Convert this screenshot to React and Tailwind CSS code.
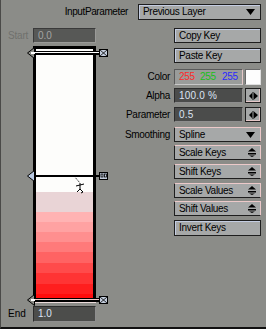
import React from "react";

const font = { fontFamily: '"Liberation Sans", Arial, sans-serif' };

// stripes of the gradient, top to bottom (height in px, colour)
const stripes = [
  [20, "bg-[#e9d4d6]"],
  [10, "bg-[#ffb3b3]"],
  [10, "bg-[#ffa2a2]"],
  [10, "bg-[#ff8f8f]"],
  [10, "bg-[#ff7a7a]"],
  [11, "bg-[#ff6363]"],
  [10, "bg-[#ff4b4b]"],
  [11, "bg-[#ff3434]"],
  [10, "bg-[#ff1e1e]"],
  [5, "bg-[#ff0c0c]"],
];

function Handle({ kind, className }) {
  const filled = kind === "mid";
  return (
    <svg
      className={"absolute left-[-10px] " + className}
      width="82"
      height="12"
      viewBox="0 0 82 12"
    >
      {filled ? (
        <rect x="8" y="5" width="66" height="2" fill="#000" />
      ) : (
        <>
          <rect x="5" y="4" width="69" height="4" fill="#000" />
          <rect
            x="4"
            y="5"
            width="69"
            height="1"
            fill={kind === "bottom" ? "#f4c8c8" : "#fff"}
          />
        </>
      )}
      <polygon
        points="1.5,6 8.5,0.5 8.5,11.5"
        fill={filled ? "#b9c9e2" : "#8c8d88"}
        stroke="#000"
        strokeWidth="1"
      />
      {!filled && <rect x="5" y="5" width="4" height="2" fill="#fff" />}
      <rect
        x="73.5"
        y="2.5"
        width="8"
        height="7"
        fill="#c3cddd"
        stroke="#000"
        strokeWidth="1"
      />
      {filled ? (
        <>
          <rect x="75" y="4" width="2" height="3" fill="none" stroke="#000" strokeWidth="0.8" />
          <rect x="78.5" y="4" width="2" height="3" fill="none" stroke="#000" strokeWidth="0.8" />
        </>
      ) : (
        <path d="M74 3 L81 9 M81 3 L74 9" stroke="#000" strokeWidth="0.8" />
      )}
    </svg>
  );
}

function Cursor() {
  return (
    <svg
      className="absolute left-[37px] top-[126px]"
      width="14"
      height="20"
      viewBox="0 0 14 20"
    >
      <path
        d="M1 1 L7 8"
        stroke="#000"
        strokeWidth="1"
        strokeDasharray="1.5 1.5"
        fill="none"
      />
      <path
        d="M7 8 L7 14 M3 11 L11 9 M7 14 L4 17 M7 14 L10 17 L8 18"
        stroke="#000"
        strokeWidth="1"
        fill="none"
      />
    </svg>
  );
}

function Button({ label, right, className = "" }) {
  return (
    <div
      className={
        "flex items-center justify-between h-[15px] w-[87px] bg-[#a6a8a8] border border-[#1e1e1e] shadow-[inset_1px_1px_0_#c4cde2] pl-[4px] pr-[4px] text-[10px] text-black leading-none " +
        className
      }
    >
      <span className="tracking-[-0.3px]">{label}</span>
      {right}
    </div>
  );
}

function DownArrow() {
  return (
    <svg width="9" height="6" viewBox="0 0 9 6">
      <polygon points="0,0 9,0 4.5,6" fill="#000" />
    </svg>
  );
}

function UpDown() {
  return (
    <svg width="8" height="9" viewBox="0 0 8 9">
      <polygon points="0,3.5 8,3.5 4,0" fill="#000" />
      <rect x="0" y="5" width="8" height="1.5" fill="#000" />
      <polygon points="1,7.5 7,7.5 4,9" fill="#000" />
    </svg>
  );
}

function Spin() {
  return (
    <div className="flex items-center justify-center h-[15px] w-[16px] bg-[#a6a8a8] border border-[#1e1e1e] shadow-[inset_-1px_-1px_0_#e6c8c8]">
      <svg width="9" height="8" viewBox="0 0 9 8">
        <polygon points="0,4 3,1 3,7" fill="#000" />
        <rect x="3.5" y="0" width="1" height="8" fill="#000" />
        <polygon points="5,0.5 9,4 5,7.5" fill="#000" />
      </svg>
    </div>
  );
}

function Field({ value, className = "" }) {
  return (
    <div
      className={
        "flex items-center h-[15px] w-[69px] bg-[#4b4c4b] border border-[#2c2c2c] border-b-[#8e8e8e] border-r-[#8e8e8e] pl-[4px] text-[10px] text-[#dce4f4] leading-none tracking-[0.2px] " +
        className
      }
    >
      {value}
    </div>
  );
}

function Label({ children }) {
  return (
    <span className="text-[10px] text-black leading-none tracking-[-0.3px] mr-[4px]">
      {children}
    </span>
  );
}

function PickerRow({ label }) {
  return (
    <Button
      label={label}
      right={<UpDown />}
      className="border-t-[#ecc9c9] border-r-[#ecc9c9] shadow-none"
    />
  );
}

export default function App() {
  return (
    <div
      style={font}
      className="w-[266px] h-[329px] bg-[#8b8c88] border-l border-l-[#4a4a48] border-b-2 border-b-[#111] overflow-hidden flex flex-col select-none"
    >
      {/* top: input parameter */}
      <div className="flex items-center justify-end h-[16px] mt-[4px] pr-[5px]">
        <span className="text-[10px] text-black leading-none tracking-[-0.4px] mr-[10px]">
          InputParameter
        </span>
        <Button
          label="Previous Layer"
          right={<DownArrow />}
          className="w-[123px] h-[16px] pr-[5px]"
        />
      </div>

      <div className="flex mt-[8px]">
        {/* gradient bar */}
        <div className="w-[109px] pl-[7px] flex flex-col">
          <div className="flex items-center h-[15px]">
            <span className="w-[25px] text-[10px] text-[#70716d] leading-none tracking-[-0.2px]">
              Start
            </span>
            <div className="flex items-center h-[15px] w-[63px] bg-[#575856] border border-[#3a3a3a] border-b-[#9a9a98] border-r-[#9a9a98] pl-[4px] text-[10px] text-[#a3a4a2] leading-none">
              0.0
            </div>
          </div>

          <div className="relative ml-[25px] mt-[3px] w-[63px] h-[256px] border-[3px] border-black bg-[#fdfdfb] flex flex-col">
            <div className="flex-1" />
            {stripes.map(([h, c], i) => (
              <div key={i} className={c} style={{ height: h }} />
            ))}
            <Handle kind="top" className="top-[-2px]" />
            <Handle kind="mid" className="top-[121px]" />
            <Handle kind="bottom" className="top-[245px]" />
            <Cursor />
          </div>
          <div className="ml-[25px] w-[63px] h-[1px] bg-[#ecdcdc]" />

          <div className="flex items-center h-[16px] mt-[3px]">
            <span className="w-[25px] text-[10px] text-black leading-none">
              End
            </span>
            <div className="flex items-center h-[16px] w-[63px] bg-[#4c4d4b] border border-[#2c2c2c] border-b-[#8e8e8e] border-r-[#8e8e8e] pl-[4px] text-[10px] text-[#dce4f4] leading-none">
              1.0
            </div>
          </div>
        </div>

        {/* controls */}
        <div className="flex-1 flex flex-col items-end pr-[5px]">
          <Button label="Copy Key" />
          <Button label="Paste Key" className="mt-[5px]" />

          <div className="flex items-center mt-[6px] h-[16px]">
            <Label>Color</Label>
            <div className="flex items-center h-[16px] w-[69px] bg-[#9a9c9a] border border-[#5a5a5a] border-b-[#c8c8c8] border-r-[#e6c8c8] pl-[4px] text-[10px] leading-none tracking-[-0.3px]">
              <span className="text-[#ff2a2a] w-[21px]">255</span>
              <span className="text-[#18c018] w-[22px]">255</span>
              <span className="text-[#2a2aff]">255</span>
            </div>
            <div className="ml-[2px] h-[16px] w-[16px] bg-[#fdfdfd] border border-[#6a6a6a] border-b-[#e0e0e0] border-r-[#e0e0e0]" />
          </div>

          <div className="flex items-center mt-[3px] h-[15px]">
            <Label>Alpha</Label>
            <Field value="100.0 %" />
            <div className="ml-[2px]">
              <Spin />
            </div>
          </div>

          <div className="flex items-center mt-[4px] h-[15px]">
            <Label>Parameter</Label>
            <Field value="0.5" />
            <div className="ml-[2px]">
              <Spin />
            </div>
          </div>

          <div className="flex items-center mt-[5px] h-[15px]">
            <Label>Smoothing</Label>
            <Button
              label="Spline"
              right={<DownArrow />}
              className="border-t-[#ecc9c9] border-r-[#ecc9c9] shadow-none pr-[5px]"
            />
          </div>

          <div className="mt-[3px]">
            <PickerRow label="Scale Keys" />
          </div>
          <div className="mt-[4px]">
            <PickerRow label="Shift Keys" />
          </div>
          <div className="mt-[4px]">
            <PickerRow label="Scale Values" />
          </div>
          <div className="mt-[3px]">
            <PickerRow label="Shift Values" />
          </div>
          <Button label="Invert Keys" className="mt-[4px] h-[16px]" />
        </div>
      </div>
    </div>
  );
}
